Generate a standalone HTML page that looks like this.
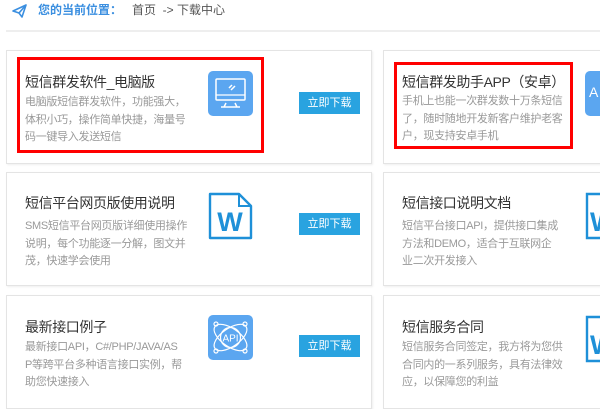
<!DOCTYPE html>
<html><head><meta charset="utf-8"><style>
*{margin:0;padding:0;box-sizing:border-box}
body{width:600px;height:400px;overflow:hidden;background:#fff;font-family:"Liberation Sans","Noto Sans CJK SC",sans-serif;position:relative}
.a{position:absolute}
.card{position:absolute;border:1px solid #e4e4e4;background:#fff;box-shadow:1px 1px 2px #eee}
.t{position:absolute;font-size:14px;letter-spacing:-0.4px;color:#333;white-space:nowrap;line-height:20px}
.d{position:absolute;font-size:11px;letter-spacing:-0.3px;color:#999;line-height:17.5px;white-space:nowrap}
.btn{position:absolute;width:61px;height:22px;background:#29a3e0;color:#fff;font-size:11px;text-align:center;line-height:22px}
.red{position:absolute;border:3px solid #f00}
</style></head><body>
<svg class="a" style="left:12px;top:4px" width="15" height="14" viewBox="0 0 15 14"><path d="M1 7 L14 1 L10 13 L7 9 Z M7 9 L14 1" fill="none" stroke="#3b8fe0" stroke-width="1.6" stroke-linejoin="round"/></svg>
<div class="a" style="left:38px;top:1px;font-size:12px;color:#3b8fe0;font-weight:bold">您的当前位置：</div>
<div class="a" style="left:132px;top:1px;font-size:12px;color:#555">首页 &nbsp;-&gt; 下载中心</div>
<div class="a" style="left:6px;top:30px;width:594px;height:2px;background:#eee"></div>

<div class="card" style="left:6px;top:50px;width:366px;height:114px"></div>
<div class="card" style="left:383px;top:50px;width:230px;height:114px"></div>
<div class="card" style="left:6px;top:172px;width:366px;height:114px"></div>
<div class="card" style="left:383px;top:172px;width:230px;height:114px"></div>
<div class="card" style="left:6px;top:295px;width:366px;height:114px"></div>
<div class="card" style="left:383px;top:295px;width:230px;height:114px"></div>

<div class="red" style="left:17px;top:57px;width:247px;height:96px"></div>
<div class="red" style="left:394px;top:62px;width:179px;height:87px"></div>

<div class="t" style="left:25px;top:72px">短信群发软件_电脑版</div>
<div class="d" style="left:25px;top:94px">电脑版短信群发软件，功能强大，<br>体积小巧，操作简单快捷，海量号<br>码一键导入发送短信</div>
<div class="a" style="left:208px;top:71px;width:45px;height:45px;background:#5ba6f0;border-radius:5px"></div>
<svg class="a" style="left:208px;top:71px" width="45" height="45" viewBox="0 0 45 45"><rect x="8" y="8" width="29" height="21" rx="1" fill="none" stroke="#fff" stroke-width="1.5"/><line x1="8" y1="24" x2="37" y2="24" stroke="#fff" stroke-width="1.2"/><path d="M18 32 L16 36 M27 32 L29 36 M13 36 H32 M21 17 L24 14 M23 19 L27 15" stroke="#fff" stroke-width="1.5" fill="none"/></svg>
<div class="btn" style="left:299px;top:92px">立即下载</div>

<div class="t" style="left:402px;top:72px">短信群发助手APP（安卓）</div>
<div class="d" style="left:402px;top:93px">手机上也能一次群发数十万条短信<br>了，随时随地开发新客户维护老客<br>户，现支持安卓手机</div>
<div class="a" style="left:585px;top:71px;width:30px;height:45px;background:#5ba6f0;border-radius:5px;color:#fff;font-size:14px;padding:13px 0 0 4px">A</div>

<div class="t" style="left:25px;top:193px">短信平台网页版使用说明</div>
<div class="d" style="left:25px;top:218px">SMS短信平台网页版详细使用操作<br>说明，每个功能逐一分解，图文并<br>茂，快速学会使用</div>
<svg class="a" style="left:207px;top:192px" width="47" height="48" viewBox="0 0 47 48"><path d="M3 2 H32 L44 14 V46 H3 Z" fill="none" stroke="#1e90d8" stroke-width="2.4" stroke-linejoin="round"/><path d="M32 2 V14 H44" fill="none" stroke="#1e90d8" stroke-width="2"/><text x="23" y="39" text-anchor="middle" font-family="Liberation Sans" font-weight="bold" font-size="27" fill="#1e90d8">W</text></svg>
<div class="btn" style="left:299px;top:213px">立即下载</div>

<div class="t" style="left:402px;top:193px">短信接口说明文档</div>
<div class="d" style="left:402px;top:218px">短信平台接口API，提供接口集成<br>方法和DEMO，适合于互联网企<br>业二次开发接入</div>
<svg class="a" style="left:584px;top:192px" width="20" height="48" viewBox="0 0 20 48"><path d="M3 2 H30 V46 H3 Z" fill="none" stroke="#1e90d8" stroke-width="2.4"/><text x="6" y="39" font-family="Liberation Sans" font-weight="bold" font-size="27" fill="#1e90d8">W</text></svg>

<div class="t" style="left:25px;top:317px">最新接口例子</div>
<div class="d" style="left:25px;top:339px">最新接口API，C#/PHP/JAVA/AS<br>P等跨平台多种语言接口实例，帮<br>助您快速接入</div>
<div class="a" style="left:208px;top:315px;width:45px;height:45px;background:#5ba6f0;border-radius:5px"></div>
<svg class="a" style="left:208px;top:315px" width="45" height="45" viewBox="0 0 45 45"><g fill="none" stroke="#fff" stroke-width="1.2"><ellipse cx="22.5" cy="22.5" rx="19" ry="9" transform="rotate(35 22.5 22.5)"/><ellipse cx="22.5" cy="22.5" rx="19" ry="9" transform="rotate(-35 22.5 22.5)"/><circle cx="22.5" cy="22.5" r="10"/><circle cx="8" cy="9" r="2"/><circle cx="37" cy="9" r="2"/><circle cx="8" cy="36" r="2"/><circle cx="37" cy="36" r="2"/></g><text x="22.5" y="26.5" text-anchor="middle" font-family="Liberation Sans" font-size="10" fill="#fff">API</text></svg>
<div class="btn" style="left:299px;top:335px">立即下载</div>

<div class="t" style="left:402px;top:317px">短信服务合同</div>
<div class="d" style="left:402px;top:339px">短信服务合同签定，我方将为您供<br>合同内的一系列服务，具有法律效<br>应，以保障您的利益</div>
<svg class="a" style="left:584px;top:315px" width="20" height="48" viewBox="0 0 20 48"><path d="M3 2 H30 V46 H3 Z" fill="none" stroke="#1e90d8" stroke-width="2.4"/><text x="6" y="39" font-family="Liberation Sans" font-weight="bold" font-size="27" fill="#1e90d8">W</text></svg>
</body></html>
